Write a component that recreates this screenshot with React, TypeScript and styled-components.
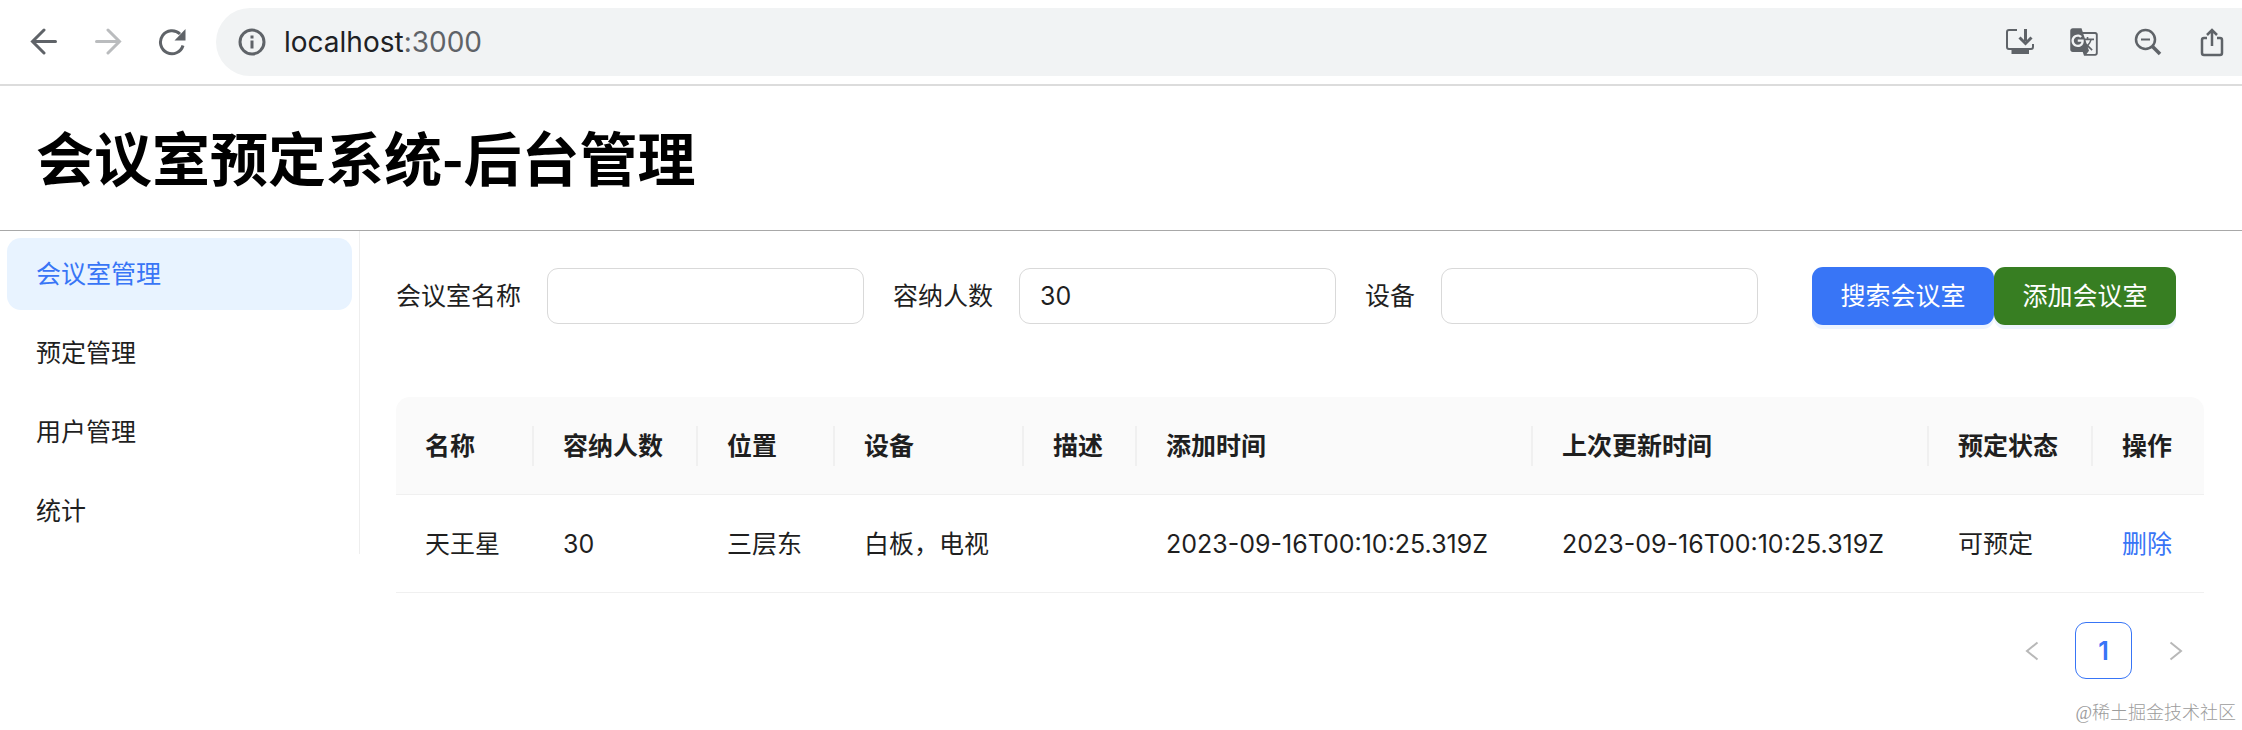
import React, { useState } from 'react';
import styled, { createGlobalStyle } from 'styled-components';
import { MdGTranslate } from 'react-icons/md';

const sans = `Inter, "Noto Sans CJK SC", sans-serif`;

const GlobalStyle = createGlobalStyle`
  *, *::before, *::after { box-sizing: border-box; }
  body {
    margin: 0;
    background: #fff;
    color: #1f1f1f;
    font: 400 25px/40px ${sans};
  }
  button, input { font: inherit; color: inherit; }
`;

const Page = styled.div`
  display: flex;
  flex-direction: column;
`;

const BrowserBar = styled.div`
  display: flex;
  align-items: center;
  gap: 22px;
  height: 86px;
  padding: 8px 0 8px 22px;
  border-bottom: 2px solid #dcdcdc;
`;

const NavButtons = styled.div`
  display: flex;
  gap: 20px;
`;

const IconButton = styled.button<{ $dim?: boolean }>`
  display: flex;
  align-items: center;
  justify-content: center;
  width: 44px;
  height: 44px;
  padding: 0;
  border: 0;
  background: none;
  color: ${(p) => (p.$dim ? '#babcbe' : '#5f6368')};
`;

const AddressBar = styled.div`
  display: flex;
  flex: 1;
  align-items: center;
  height: 68px;
  padding: 0 8px 0 14px;
  border-radius: 34px 0 0 34px;
  background: #f1f3f4;
`;

const Address = styled.span`
  flex: 1;
  padding-left: 10px;
  font-size: 28px;
  color: #5f6368;
`;

const Host = styled.span`
  color: #202124;
`;

const AddressActions = styled.div`
  display: flex;
  gap: 20px;
`;

const Header = styled.header`
  display: flex;
  align-items: center;
  height: 145px;
  padding: 0 36px 4px;
  border-bottom: 1px solid #a8a8a8;
`;

const Title = styled.h1`
  margin: 0;
  font-family: "Noto Sans CJK SC", sans-serif;
  font-size: 58px;
  line-height: 80px;
  font-weight: 600;
  color: #000;
`;

const Body = styled.div`
  display: flex;
  align-items: flex-start;
`;

const Menu = styled.nav`
  display: flex;
  flex: none;
  flex-direction: column;
  gap: 7px;
  width: 360px;
  padding: 7px;
  border-right: 1px solid #eee;
`;

const MenuItem = styled.a<{ $active?: boolean }>`
  padding: 16px 29px;
  border-radius: 14px;
  background: ${(p) => (p.$active ? '#e8f3ff' : 'transparent')};
  color: ${(p) => (p.$active ? '#3875f6' : '#1f1f1f')};
  text-decoration: none;
`;

const Main = styled.main`
  flex: 1;
  min-width: 0;
  padding: 36px 38px 0 36px;
`;

const SearchForm = styled.form`
  display: flex;
  align-items: center;
  gap: 29px;
  height: 58px;
`;

const Field = styled.label`
  display: flex;
  align-items: center;
  gap: 26px;
  white-space: nowrap;
`;

const TextBox = styled.input`
  width: 317px;
  height: 56px;
  padding: 0 20px;
  border: 1px solid #d9d9d9;
  border-radius: 11px;
  background: #fff;
`;

const FormButtons = styled.div`
  display: flex;
  padding-left: 25px;
`;

const ActionButton = styled.button<{ $green?: boolean }>`
  width: 182px;
  height: 58px;
  padding: 0;
  border: 0;
  border-radius: 11px;
  background: ${(p) => (p.$green ? '#377e22' : '#3875f6')};
  box-shadow: 0 4px 0 #edf4ff;
  color: #fff;
`;

const RoomTable = styled.table`
  width: 100%;
  margin-top: 72px;
  border-collapse: separate;
  border-spacing: 0;
  table-layout: fixed;
`;

const HeadCell = styled.th`
  height: 98px;
  padding: 0;
  border-bottom: 1px solid #f0f0f0;
  background: #fafafa;
  font-weight: 600;
  text-align: left;
  white-space: nowrap;

  &:first-child { border-top-left-radius: 14px; }
  &:last-child { border-top-right-radius: 14px; }
`;

const HeadLabel = styled.div<{ $last?: boolean }>`
  padding-left: 29px;
  border-right: ${(p) => (p.$last ? '0' : '2px solid #f0f0f0')};
`;

const Cell = styled.td`
  height: 98px;
  padding: 0 0 0 29px;
  border-bottom: 1px solid #f0f0f0;
  white-space: nowrap;
`;

const DeleteLink = styled.a`
  color: #3875f6;
  text-decoration: none;
`;

const Pagination = styled.nav`
  display: flex;
  justify-content: flex-end;
  gap: 15px;
  margin-top: 29px;
`;

const PageButton = styled.button<{ $current?: boolean }>`
  display: flex;
  align-items: center;
  justify-content: center;
  width: 57px;
  height: 57px;
  padding: 0;
  border: 1px solid ${(p) => (p.$current ? '#3875f6' : 'transparent')};
  border-radius: 11px;
  background: #fff;
  color: ${(p) => (p.$current ? '#3875f6' : '#b8b8b8')};
  font-weight: 600;
`;

const Watermark = styled.footer`
  padding: 22px 6px 0;
  font: 300 18px/24px "Liberation Serif", "Noto Sans CJK SC", serif;
  color: #9c9c9c;
  text-align: right;
`;

const columns = [
  { title: '名称', width: 138 },
  { title: '容纳人数', width: 164 },
  { title: '位置', width: 137 },
  { title: '设备', width: 189 },
  { title: '描述', width: 113 },
  { title: '添加时间', width: 396 },
  { title: '上次更新时间', width: 396 },
  { title: '预定状态', width: 164 },
  { title: '操作', width: 111 },
];

const rooms = [
  ['天王星', '30', '三层东', '白板，电视', '', '2023-09-16T00:10:25.319Z', '2023-09-16T00:10:25.319Z', '可预定'],
];

const menu = ['会议室管理', '预定管理', '用户管理', '统计'];

const BackIcon = () => (
  <svg width="28" height="28" viewBox="0 0 28 28" fill="none" stroke="currentColor" strokeWidth="3" strokeLinecap="round">
    <path d="M25.500 13.500H3M14 2 2.500 13.500 14 25" />
  </svg>
);

const ForwardIcon = () => (
  <svg width="28" height="28" viewBox="0 0 28 28" fill="none" stroke="currentColor" strokeWidth="3" strokeLinecap="round">
    <path d="M2.500 13.500H25M14 2 25.500 13.500 14 25" />
  </svg>
);

const ReloadIcon = () => (
  <svg width="28" height="28" viewBox="0 0 28 28">
    <path d="M25 17.500A11.500 11.500 0 1 1 22 6" fill="none" stroke="currentColor" strokeWidth="3" />
    <path d="M27.500 1V12.500H16.500Z" fill="currentColor" />
  </svg>
);

const InfoIcon = () => (
  <svg width="28" height="28" viewBox="0 0 28 28">
    <circle cx="14" cy="14" r="12" fill="none" stroke="currentColor" strokeWidth="3" />
    <path d="M12.500 7.500h3v3h-3zM12.500 12.500h3v8h-3z" fill="currentColor" />
  </svg>
);

const InstallIcon = () => (
  <svg width="30" height="30" viewBox="0 0 30 30" fill="none" stroke="currentColor" strokeWidth="2">
    <path d="M12 3H4a2 2 0 0 0-2 2V20a2 2 0 0 0 2 2H26a2 2 0 0 0 2-2V17" />
    <path d="M20.500 2V14M14.500 10.500 20.500 16.500 26.500 10.500" strokeWidth="3" />
    <path d="M6.500 22H24V27H6.500Z" fill="currentColor" stroke="none" />
  </svg>
);

const ZoomOutIcon = () => (
  <svg width="28" height="28" viewBox="0 0 28 28" fill="none" stroke="currentColor">
    <circle cx="11.500" cy="11.500" r="9.500" strokeWidth="2.500" />
    <path d="M18 18 26 26" strokeWidth="3.500" />
    <path d="M7 11.500H16" strokeWidth="2" />
  </svg>
);

const ShareIcon = () => (
  <svg width="28" height="30" viewBox="0 0 28 30" fill="none" stroke="currentColor" strokeWidth="2.500">
    <path d="M9 11H6a2 2 0 0 0-2 2V26a2 2 0 0 0 2 2H22a2 2 0 0 0 2-2V13a2 2 0 0 0-2-2H19" />
    <path d="M14 19V3M9 8 14 3 19 8" />
  </svg>
);

const Chevron = ({ left }: { left?: boolean }) => (
  <svg width="28" height="28" viewBox="0 0 28 28" fill="none" stroke="currentColor" strokeWidth="2">
    <path d={left ? 'M19.500 5.500 9 14 19.500 22.500' : 'M8.500 5.500 19 14 8.500 22.500'} />
  </svg>
);

export default function App() {
  const [name, setName] = useState('');
  const [capacity, setCapacity] = useState('30');
  const [equipment, setEquipment] = useState('');

  return (
    <>
      <GlobalStyle />
      <Page>
        <BrowserBar>
          <NavButtons>
            <IconButton aria-label="后退"><BackIcon /></IconButton>
            <IconButton aria-label="前进" $dim><ForwardIcon /></IconButton>
            <IconButton aria-label="重新加载"><ReloadIcon /></IconButton>
          </NavButtons>
          <AddressBar>
            <IconButton aria-label="网站信息"><InfoIcon /></IconButton>
            <Address><Host>localhost</Host>:3000</Address>
            <AddressActions>
              <IconButton aria-label="安装"><InstallIcon /></IconButton>
              <IconButton aria-label="翻译"><MdGTranslate size={30} /></IconButton>
              <IconButton aria-label="缩小"><ZoomOutIcon /></IconButton>
              <IconButton aria-label="分享"><ShareIcon /></IconButton>
            </AddressActions>
          </AddressBar>
        </BrowserBar>

        <Header>
          <Title>会议室预定系统-后台管理</Title>
        </Header>

        <Body>
          <Menu>
            {menu.map((item, i) => (
              <MenuItem key={item} href="#" $active={i === 0}>{item}</MenuItem>
            ))}
          </Menu>

          <Main>
            <SearchForm onSubmit={(e) => e.preventDefault()}>
              <Field>
                会议室名称
                <TextBox value={name} onChange={(e) => setName(e.target.value)} />
              </Field>
              <Field>
                容纳人数
                <TextBox value={capacity} onChange={(e) => setCapacity(e.target.value)} />
              </Field>
              <Field>
                设备
                <TextBox value={equipment} onChange={(e) => setEquipment(e.target.value)} />
              </Field>
              <FormButtons>
                <ActionButton type="submit">搜索会议室</ActionButton>
                <ActionButton type="button" $green>添加会议室</ActionButton>
              </FormButtons>
            </SearchForm>

            <RoomTable>
              <colgroup>
                {columns.map((c) => <col key={c.title} width={c.width} />)}
              </colgroup>
              <thead>
                <tr>
                  {columns.map((c, i) => (
                    <HeadCell key={c.title} scope="col">
                      <HeadLabel $last={i === columns.length - 1}>{c.title}</HeadLabel>
                    </HeadCell>
                  ))}
                </tr>
              </thead>
              <tbody>
                {rooms.map((room) => (
                  <tr key={room[0]}>
                    {room.map((value, i) => <Cell key={i}>{value}</Cell>)}
                    <Cell><DeleteLink href="#">删除</DeleteLink></Cell>
                  </tr>
                ))}
              </tbody>
            </RoomTable>

            <Pagination aria-label="分页">
              <PageButton aria-label="上一页" disabled><Chevron left /></PageButton>
              <PageButton $current>1</PageButton>
              <PageButton aria-label="下一页" disabled><Chevron /></PageButton>
            </Pagination>
          </Main>
        </Body>

        <Watermark>@稀土掘金技术社区</Watermark>
      </Page>
    </>
  );
}
